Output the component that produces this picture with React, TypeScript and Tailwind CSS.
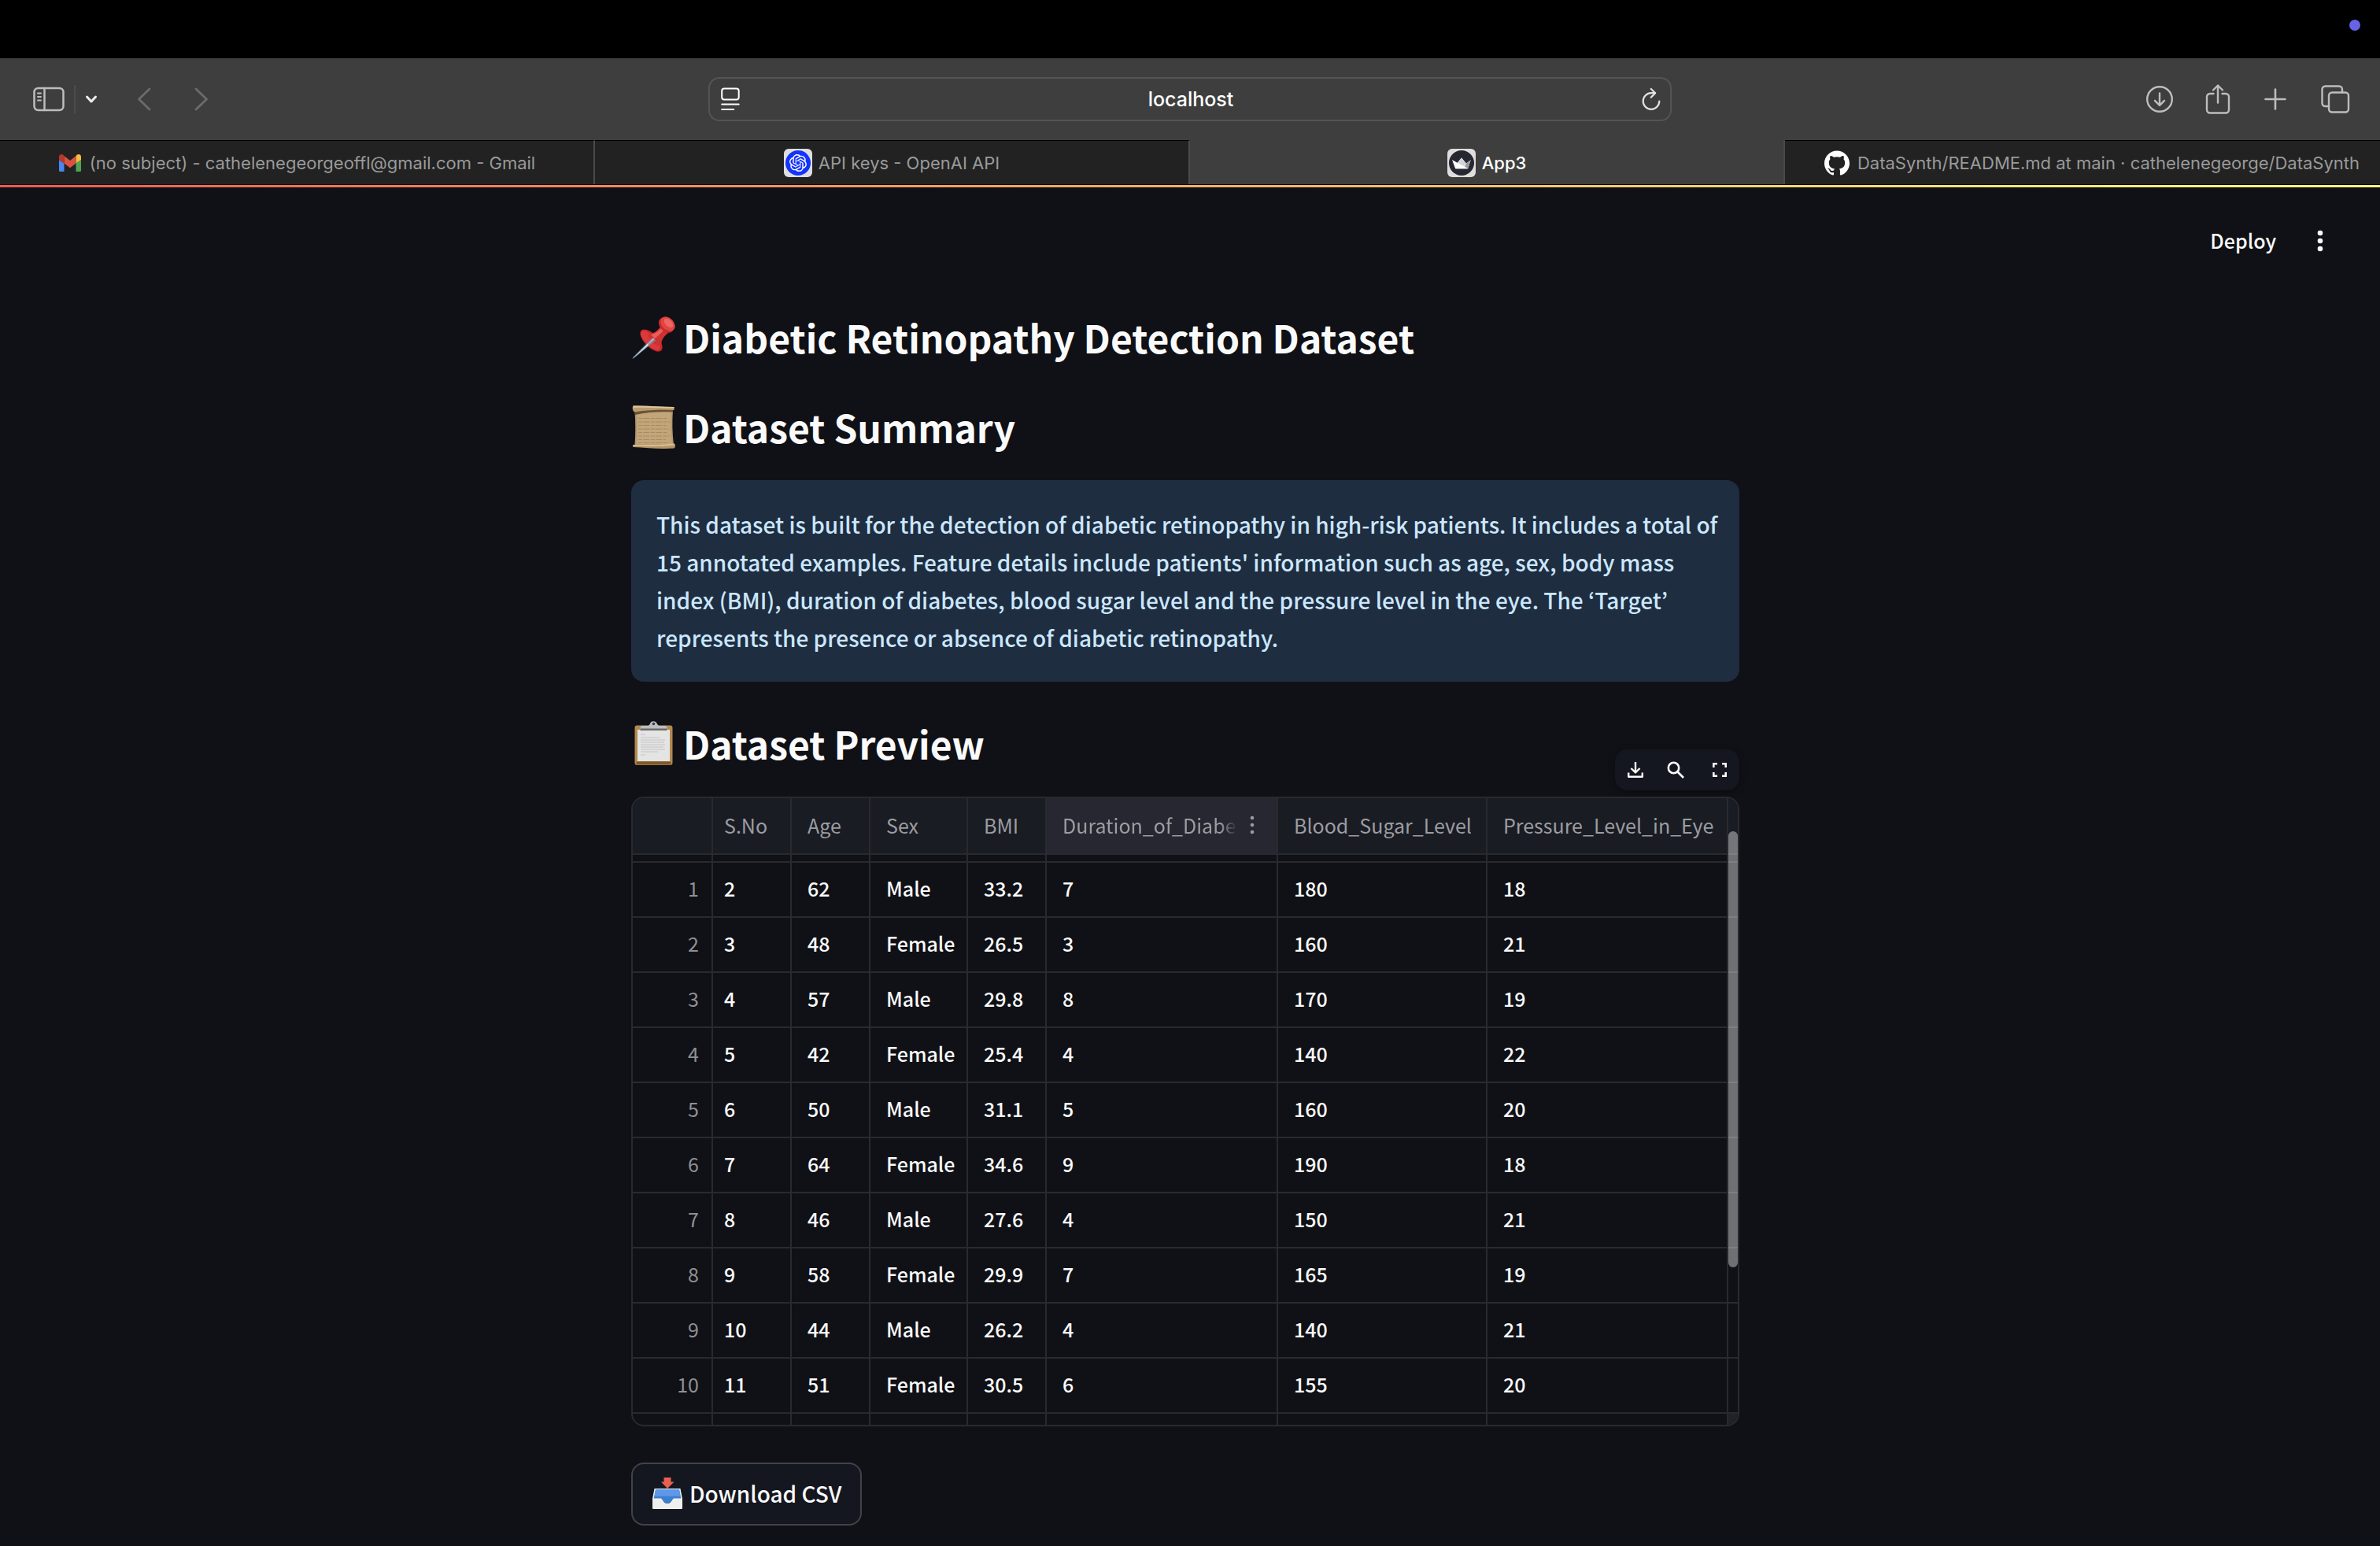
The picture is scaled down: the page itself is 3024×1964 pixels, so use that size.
import React from "react";
import { SiGithub, SiOpenai } from "react-icons/si";

const columns = [
  "S.No",
  "Age",
  "Sex",
  "BMI",
  "Duration_of_Diabetes",
  "Blood_Sugar_Level",
  "Pressure_Level_in_Eye",
];

const rows: string[][] = [
  ["1", "2", "62", "Male", "33.2", "7", "180", "18"],
  ["2", "3", "48", "Female", "26.5", "3", "160", "21"],
  ["3", "4", "57", "Male", "29.8", "8", "170", "19"],
  ["4", "5", "42", "Female", "25.4", "4", "140", "22"],
  ["5", "6", "50", "Male", "31.1", "5", "160", "20"],
  ["6", "7", "64", "Female", "34.6", "9", "190", "18"],
  ["7", "8", "46", "Male", "27.6", "4", "150", "21"],
  ["8", "9", "58", "Female", "29.9", "7", "165", "19"],
  ["9", "10", "44", "Male", "26.2", "4", "140", "21"],
  ["10", "11", "51", "Female", "30.5", "6", "155", "20"],
];

/* ---------- browser chrome icons ---------- */

const stroke = {
  fill: "none",
  stroke: "currentColor",
  strokeLinecap: "round" as const,
  strokeLinejoin: "round" as const,
};

function SidebarIcon() {
  return (
    <svg width="40" height="32" viewBox="0 0 40 32" {...stroke} strokeWidth="2.5">
      <rect x="1.5" y="2" width="37" height="28" rx="5" />
      <path d="M14.5 2v28" />
      <path d="M6 8.5h4M6 13h4M6 17.5h4" strokeWidth="2" />
    </svg>
  );
}

function DownloadCircleIcon() {
  return (
    <svg width="36" height="36" viewBox="0 0 36 36" {...stroke} strokeWidth="2.4">
      <circle cx="18" cy="18" r="15.8" />
      <path d="M18 10.5v15M12 19.8l6 6 6-6" />
    </svg>
  );
}

function ShareIcon() {
  return (
    <svg width="32" height="40" viewBox="0 0 32 40" {...stroke} strokeWidth="2.4">
      <path d="M10.5 13H6a4 4 0 0 0-4 4v16.5a4 4 0 0 0 4 4h20a4 4 0 0 0 4-4V17a4 4 0 0 0-4-4h-4.5" />
      <path d="M16 24.5V3M10 8.5l6-6 6 6" />
    </svg>
  );
}

function PlusIcon() {
  return (
    <svg width="28" height="28" viewBox="0 0 28 28" {...stroke} strokeWidth="2.6">
      <path d="M14 1.5v25M1.5 14h25" />
    </svg>
  );
}

function TabsIcon() {
  return (
    <svg width="38" height="38" viewBox="0 0 38 38" {...stroke} strokeWidth="2.4">
      <rect x="11" y="10.5" width="25" height="25" rx="4" />
      <path d="M11 28H6.5a4 4 0 0 1-4-4V6.5a4 4 0 0 1 4-4H24a4 4 0 0 1 4 4v4" />
    </svg>
  );
}

function ReaderIcon() {
  return (
    <svg width="24" height="30" viewBox="0 0 24 30" {...stroke} strokeWidth="2">
      <rect x="1.2" y="1.5" width="21.5" height="14" rx="3" />
      <path d="M1.2 21.5h21.5M1.2 28h15" />
    </svg>
  );
}

function ReloadIcon() {
  return (
    <svg width="24" height="30" viewBox="0 0 24 30" {...stroke} strokeWidth="2.2">
      <path d="M22.3 17.5a10.3 10.3 0 1 1-10.3-10.3h5" />
      <path d="M11.8 2l5.4 5.2-5.4 5.4" />
    </svg>
  );
}

function GmailIcon() {
  return (
    <svg width="30" height="24" viewBox="0 0 30 24">
      <path d="M1 8v13.5A1.5 1.5 0 0 0 2.5 23H7.5V12.5z" fill="#4a86f0" />
      <path d="M29 8v13.5a1.5 1.5 0 0 1-1.5 1.5H22.5V12.5z" fill="#4da455" />
      <path d="M22.5 3.2V12.5L29 8V4.2C29 1.3 25.8 0 23.6 1.7z" fill="#f2bf42" />
      <path d="M7.5 12.5V3l7.5 6 7.5-6v9.5l-7.5 5.7z" fill="#da5140" />
      <path d="M1 4.2V8l6.5 4.5V3.2L6.4 1.7C4.2 0 1 1.3 1 4.2z" fill="#b8372c" />
    </svg>
  );
}

function CrownIcon() {
  return (
    <svg width="32" height="32" viewBox="0 0 30 30">
      <circle cx="15" cy="15" r="15" fill="#262730" />
      <path d="M4 11.5l5.5 4L15 9l5.5 6.5 5.5-4-3.3 10.2H7.8z" fill="#ffffff" />
      <path d="M9.5 15.5L15 9l5.5 6.5-1.2 4.5z" fill="#d4d4d8" />
      <path d="M20.5 15.5l5.500-4-3.300 10.200-3.400-1.700z" fill="#98989c" />
      <path d="M4 11.5l18.700 10.200H7.800z" fill="#ffffff" />
    </svg>
  );
}

/* ---------- page icons ---------- */

function PushpinIcon() {
  return (
    <svg width="58" height="58" viewBox="0 0 58 58" className="shrink-0">
      <ellipse cx="25.5" cy="33.5" rx="18" ry="8.5" transform="rotate(45 25.5 33.5)" fill="#c4282b" />
      <ellipse cx="24.5" cy="33.5" rx="16" ry="6.5" transform="rotate(45 24.5 33.5)" fill="#dc3a3a" />
      <path d="M22 25c6 0 11-3 16-10l9 9c-6 5-9 9-8.5 15-2 3-8 1-12-3.5S20 27 22 25z" fill="#cf3031" />
      <path d="M25 26c6-1 11-5 15-10l3 3c-5 5-9 9-13 12z" fill="#ea5f5c" />
      <ellipse cx="44.5" cy="14" rx="11" ry="8" transform="rotate(45 44.5 14)" fill="#c42c2d" />
      <ellipse cx="46.5" cy="12.5" rx="10.5" ry="7.5" transform="rotate(45 46.5 12.5)" fill="#e24443" />
      <ellipse cx="47.5" cy="11.5" rx="7" ry="4" transform="rotate(45 47.5 11.5)" fill="#ec6663" />
      <path d="M27 30l4 3.5L3.5 55.8 1.5 57l1-2.2z" fill="#8396a8" />
      <path d="M28 30.5l1.5 1.5L3 56z" fill="#e4eef6" />
      <path d="M27 30l4 3.5-8 6.5-3-3z" fill="#a0506a" opacity=".45" />
    </svg>
  );
}

function ScrollIcon() {
  return (
    <svg width="58" height="58" viewBox="0 0 58 58" className="shrink-0">
      <path d="M4.5 8H53c-1 14-1 28 1 44H4.5c1-14 1-28 0-44z" fill="#b3966c" />
      <path d="M6.5 9H51c-1 14-1 28 1 42H6.5c1-14 1-28 0-42z" fill="#c3a57a" />
      <path
        d="M9 18.5h36M9 23h40M9 27.5h36M9 32h39M9 36.5h37M9 41h40M9 45.5h35M9 49.5h39"
        stroke="#a88b61"
        strokeWidth="1.2"
        strokeDasharray="5 1.3 8 1.5"
      />
      <path d="M5 9l48-2v3.5C38 10 22 10 5 14z" fill="#6a5335" />
      <path d="M2.5 2.5C20 2 38 4 54.5 4v4C38 7.5 20 7 4 10.5 1.5 9 1 4 2.5 2.5z" fill="#b99c6f" />
      <path d="M2.5 2.5C20 2 38 4 54.5 4v1.5C38 5.5 20 4 3 5z" fill="#dcc49b" />
      <path d="M2.5 52c18 0 34 .5 52-1.500 2 .8 2 4.500 0 6-18 1.200-34-.5-52-1.500-.8-1-.8-2 0-3z" fill="#b3956a" />
      <path d="M2.5 52c18 0 34 .5 52-1.500v2c-18 2-34 1.500-52 1z" fill="#d9bf94" />
    </svg>
  );
}

function ClipboardIcon() {
  return (
    <svg width="58" height="58" viewBox="0 0 58 58" className="shrink-0">
      <rect x="4.5" y="6.5" width="48" height="50.5" rx="3" fill="#b28a50" />
      <rect x="6.5" y="52.5" width="44" height="4" rx="1.5" fill="#7e5a2a" />
      <path d="M8 12h41v40H8z" fill="#e4e4e5" />
      <path
        d="M12 18h6M12 22h24M12 25h31M12 28h30M12 31h31M12 34h29M12 37h31M12 40h22M12 44h6"
        stroke="#c3c3c6"
        strokeWidth="1.2"
      />
      <path d="M11.5 12V9.5c0-2 1.5-2.5 4-2.5h6c2.5-1 2.5-4 4-5s4-1 5.5 0 2 4 4.500 5h6c2.500 0 4 .5 4 2.500V12z" fill="#b9bec4" />
      <path d="M11.5 10.5h34V13h-34z" fill="#6f6a66" />
      <circle cx="28.5" cy="4.5" r="1.7" fill="#33363b" />
    </svg>
  );
}

function InboxTrayIcon() {
  return (
    <svg width="40" height="42" viewBox="0 0 40 42" className="shrink-0">
      <path d="M3.5 15h33L39 28H1z" fill="#e9eef2" />
      <path d="M5 16.2h30L37.5 29h-35z" fill="#3f7fd0" />
      <path d="M5 16.2h30l1.5 8.5h-33z" fill="#5d98ea" />
      <path d="M1 27.5h10.500c3 0 3 6.500 8.500 6.500s5.500-6.500 8.500-6.500H39V40a1 1 0 0 1-1 1H2a1 1 0 0 1-1-1z" fill="#efefed" />
      <path d="M11 27.5h18c-3.500 0-3.500 6.500-9 6.500s-5.500-6.500-9-6.500z" fill="#3f7fd0" />
      <path d="M15.5 1h9v5.500h4L20 15l-8-8.500h3.500z" fill="#e8604f" />
    </svg>
  );
}

function Kebab() {
  return (
    <svg width="8" height="28" viewBox="0 0 8 28" fill="currentColor">
      <circle cx="4" cy="4" r="3.3" />
      <circle cx="4" cy="14" r="3.3" />
      <circle cx="4" cy="24" r="3.3" />
    </svg>
  );
}

function ColumnMenuIcon() {
  return (
    <svg width="6" height="24" viewBox="0 0 6 24" fill="currentColor" className="ml-4 shrink-0">
      <circle cx="3" cy="3" r="2.3" />
      <circle cx="3" cy="12" r="2.3" />
      <circle cx="3" cy="21" r="2.3" />
    </svg>
  );
}

/* ---------- sections ---------- */

function Tab({
  icon,
  label,
  active = false,
  className = "",
}: {
  icon: React.ReactNode;
  label: string;
  active?: boolean;
  className?: string;
}) {
  return (
    <button
      type="button"
      role="tab"
      aria-selected={active}
      className={
        "flex h-14 min-w-0 items-center justify-center overflow-hidden border-r-2 border-t border-r-[#4a4a4a] pt-px text-[22px] leading-8 whitespace-nowrap last:border-r-0 " +
        (active
          ? "border-t-[#3e3e3e] bg-[#3e3e3e] font-medium text-white "
          : "border-t-black bg-[#222222] text-[#9a9a9a] ") +
        className
      }
    >
      {icon}
      {label}
    </button>
  );
}

function BrowserChrome() {
  return (
    <header className="font-[Inter,'Liberation_Sans',sans-serif]">
      <div className="flex h-[74px] items-start justify-end bg-black pt-[25px] pr-[25px]">
        <span className="size-3.5 rounded-full bg-[#6763e8]" />
      </div>
      <div className="grid h-[104px] grid-cols-[1fr_minmax(0,1224px)_1fr] items-center bg-[#3e3e3e] text-[#bdbdbd]">
        <div className="flex items-center pl-[42px]">
          <button type="button" aria-label="Show sidebar">
            <SidebarIcon />
          </button>
          <span className="ml-3 h-9 w-0.5 bg-[#4c4c4c]" />
          <button type="button" aria-label="Tab groups" className="ml-3 text-[#ececec]">
            <svg width="16" height="12" viewBox="0 0 16 12" {...stroke} strokeWidth="3">
              <path d="M2.5 3l5.5 6 5.5-6" />
            </svg>
          </button>
          <button type="button" aria-label="Back" className="ml-[50px] text-[#6b6b6b]">
            <svg width="18" height="30" viewBox="0 0 18 30" {...stroke} strokeWidth="2.8">
              <path d="M16 2L2.5 15 16 28" />
            </svg>
          </button>
          <button type="button" aria-label="Forward" className="ml-[55px] text-[#6b6b6b]">
            <svg width="18" height="30" viewBox="0 0 18 30" {...stroke} strokeWidth="2.8">
              <path d="M2 2l13.5 13L2 28" />
            </svg>
          </button>
        </div>
        <div className="flex h-14 items-center rounded-[14px] border-2 border-[#545454] pr-3 pl-3.5">
          <button type="button" aria-label="Reader" className="text-white">
            <ReaderIcon />
          </button>
          <input
            aria-label="Address"
            defaultValue="localhost"
            className="min-w-0 flex-1 bg-transparent text-center text-[25px] leading-8 font-medium text-white outline-none"
          />
          <button type="button" aria-label="Reload" className="text-[#e2e2e2]">
            <ReloadIcon />
          </button>
        </div>
        <div className="flex items-center justify-end pr-[38px]">
          <button type="button" aria-label="Downloads">
            <DownloadCircleIcon />
          </button>
          <button type="button" aria-label="Share" className="ml-10">
            <ShareIcon />
          </button>
          <button type="button" aria-label="New tab" className="ml-[43px]">
            <PlusIcon />
          </button>
          <button type="button" aria-label="Tab overview" className="ml-[43px]">
            <TabsIcon />
          </button>
        </div>
      </div>
      <div role="tablist" className="grid grid-cols-4 border-b border-black">
        <Tab
          icon={<span className="mr-2.5"><GmailIcon /></span>}
          label="(no subject) - cathelenegeorgeoffl@gmail.com - Gmail"
        />
        <Tab
          icon={
            <span className="mr-2 flex size-9 items-center justify-center rounded-md bg-[#dedede]">
              <span className="flex size-8 items-center justify-center rounded-full bg-[#1433fb] text-white">
                <SiOpenai size={22} />
              </span>
            </span>
          }
          label="API keys - OpenAI API"
        />
        <Tab
          active
          icon={
            <span className="mr-2 flex size-9 items-center justify-center rounded-md bg-[#dedede]">
              <CrownIcon />
            </span>
          }
          label="App3"
        />
        <Tab
          className="pl-6"
          icon={<SiGithub size={32} className="mr-2.5 shrink-0 text-white" />}
          label="DataSynth/README.md at main · cathelenegeorge/DataSynth"
        />
      </div>
    </header>
  );
}

function SectionHeading({ icon, children }: { icon: React.ReactNode; children: React.ReactNode }) {
  return (
    <h2 className="flex items-center gap-2 text-[48px] leading-[68px] font-semibold text-[#fafafa]">
      {icon}
      {children}
    </h2>
  );
}

const line = "border-r-2 border-b-2 border-[#292a2f] ";

function DataTable() {
  return (
    <div className="relative">
      <div className="absolute right-0 bottom-full mb-2 flex h-[52px] items-center rounded-2xl bg-[#141720] px-4 text-[#fafafa] shadow-[0_2px_8px_rgba(0,0,0,0.35)]">
        <button type="button" aria-label="Download as CSV">
          <svg width="20" height="20" viewBox="0 0 20 20" fill="none" stroke="currentColor" strokeWidth="2.4" strokeLinejoin="round">
            <path d="M10 0v13M4.5 8l5.5 5.5L15.5 8" />
            <path d="M1.2 13.5v5.3h17.6v-5.3" />
          </svg>
        </button>
        <button type="button" aria-label="Search" className="ml-[30px]">
          <svg width="22" height="22" viewBox="0 0 22 22" fill="none" stroke="currentColor" strokeWidth="2.6">
            <circle cx="8.5" cy="8.5" r="6.7" />
            <path d="M13 13l8 8" />
          </svg>
        </button>
        <button type="button" aria-label="Fullscreen" className="ml-9">
          <svg width="18" height="18" viewBox="0 0 18 18" fill="none" stroke="currentColor" strokeWidth="2.6">
            <path d="M1.3 6V1.3H6M12 1.3h4.7V6M16.7 12v4.7H12M6 16.7H1.3V12" />
          </svg>
        </button>
      </div>
      <div className="relative overflow-hidden rounded-2xl border-2 border-[#292a2f]">
        <table className="w-full table-fixed border-separate border-spacing-0 text-[25px] leading-8">
          <colgroup>
            <col className="w-[102px]" />
            <col className="w-[100px]" />
            <col className="w-[100px]" />
            <col className="w-[124px]" />
            <col className="w-[100px]" />
            <col className="w-[294px]" />
            <col className="w-[266px]" />
            <col />
            <col className="w-3" />
          </colgroup>
          <thead>
            <tr className="h-[72px] bg-[#1a1c24] text-left text-[#9c9da1]">
              <td className={line} />
              {columns.map((name, i) => (
                <th
                  key={name}
                  scope="col"
                  className={
                    line +
                    "pt-0 pr-0 pb-0.5 font-normal " +
                    (i === 0 ? "pl-3.5 " : "pl-5 ") +
                    (i === 4 ? "bg-[#262730]" : "")
                  }
                >
                  {i === 4 ? (
                    <span className="flex items-center">
                      <span className="w-[222px] overflow-hidden mask-r-from-90% whitespace-nowrap">{name}</span>
                      <ColumnMenuIcon />
                    </span>
                  ) : (
                    <span className="whitespace-nowrap">{name}</span>
                  )}
                </th>
              ))}
              <td className="border-b-2 border-[#292a2f]" />
            </tr>
          </thead>
          <tbody className="font-medium text-[#fafafa]">
            <tr className="h-2.5" aria-hidden="true">
              {[...Array(8)].map((_, i) => (
                <td key={i} className={line + "p-0"} />
              ))}
              <td className="border-b-2 border-[#292a2f] p-0" />
            </tr>
            {rows.map(([index, ...cells]) => (
              <tr key={index} className="h-[70px]">
                <th scope="row" className={line + "pt-0 pr-4 pb-1 pl-0 text-right font-normal text-[#8f9093]"}>
                  {index}
                </th>
                {cells.map((cell, i) => (
                  <td key={i} className={line + "pt-0 pr-0 pb-1 " + (i === 0 ? "pl-3.5" : "pl-5")}>
                    {cell}
                  </td>
                ))}
                <td className="border-b-2 border-[#292a2f] p-0" />
              </tr>
            ))}
            <tr className="h-3.5" aria-hidden="true">
              {[...Array(8)].map((_, i) => (
                <td key={i} className="border-r-2 border-[#292a2f] p-0" />
              ))}
              <td className="bg-[#212226] p-0" />
            </tr>
          </tbody>
        </table>
        <div className="absolute top-[42px] right-0 h-[554px] w-3 rounded-full bg-white/40" />
      </div>
    </div>
  );
}

export default function App() {
  return (
    <div className="min-h-screen bg-[#101116]">
      <BrowserChrome />
      <div className="h-[3px] bg-linear-to-r from-[#ec5a50] to-[#fffd80]" />
      <div className="font-['Noto_Sans_CJK_KR',sans-serif]">
        <div className="flex h-[136px] items-center justify-end pr-[72px] text-[#fafafa]">
          <button type="button" className="pb-0.5 text-[25px] leading-8 font-medium">
            Deploy
          </button>
          <button type="button" aria-label="Main menu" className="ml-[52px]">
            <Kebab />
          </button>
        </div>
        <main className="pt-5 pr-3 pb-6">
          <div className="mx-auto max-w-[1408px]">
            <SectionHeading icon={<PushpinIcon />}>Diabetic Retinopathy Detection Dataset</SectionHeading>
            <div className="mt-[46px]">
              <SectionHeading icon={<ScrollIcon />}>Dataset Summary</SectionHeading>
            </div>
            <p className="mt-[34px] rounded-2xl bg-[#1f2d40] py-8 pr-5 pl-8 text-[28px] leading-[48px] font-medium text-[#cbe7fd]">
              This dataset is built for the detection of diabetic retinopathy in high-risk patients. It includes a
              total of 15 annotated examples. Feature details include patients' information such as age, sex, body mass
              index (BMI), duration of diabetes, blood sugar level and the pressure level in the eye. The ‘Target’
              represents the presence or absence of diabetic retinopathy.
            </p>
            <div className="mt-11 mb-[34px]">
              <SectionHeading icon={<ClipboardIcon />}>Dataset Preview</SectionHeading>
            </div>
            <DataTable />
            <button
              type="button"
              className="mt-[46px] flex h-20 items-center gap-2 rounded-2xl border-2 border-[#41424a] bg-[#141720] px-6 pb-0.5 text-[28px] leading-[48px] font-medium text-[#fafafa]"
            >
              <InboxTrayIcon />
              Download CSV
            </button>
          </div>
        </main>
      </div>
    </div>
  );
}
